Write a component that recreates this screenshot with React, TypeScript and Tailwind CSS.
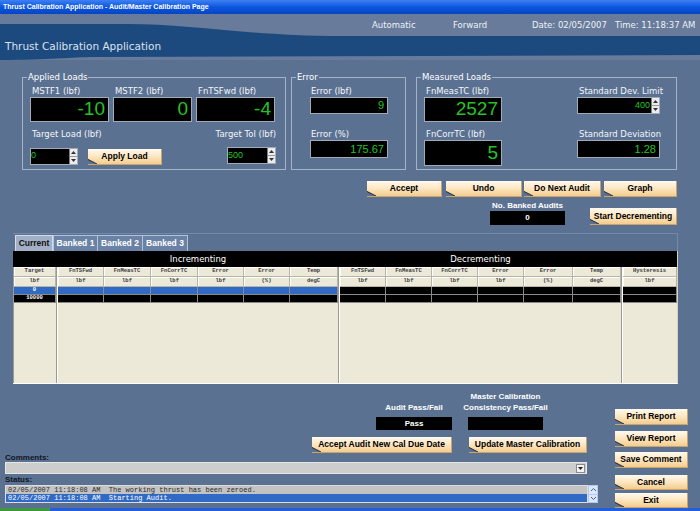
import type { ReactNode } from 'react';

function Btn({ label, className = '' }: { label: string; className?: string }) {
  return (
    <div className={`relative flex items-center justify-center whitespace-nowrap bg-linear-to-b from-[#fffaf0] via-[#fde6c0] to-[#f4cc8e] border-r border-b border-[#c9a46c] font-['Liberation_Sans',sans-serif] text-[8.5px] font-bold text-black ${className}`}>
      {label}
      <svg className="absolute left-0 bottom-0" width="9" height="5" viewBox="0 0 9 5">
        <polygon points="0,0 9,5 0,5" fill="#5b7192" />
        <line x1="0" y1="0.5" x2="9" y2="5" stroke="#2e2e2e" strokeWidth="1" />
      </svg>
    </div>
  );
}

function Label({ children, className = '' }: { children: ReactNode; className?: string }) {
  return <div className={`h-[12px] text-[8.5px] leading-[12px] text-[#f3f5f8] whitespace-nowrap ${className}`}>{children}</div>;
}

function Display({ value, className }: { value: string; className: string }) {
  return (
    <div className={`flex items-center justify-end bg-black border border-[#a3abb8] pr-[3px] text-[#24c424] font-['Liberation_Sans',sans-serif] ${className}`}>
      {value}
    </div>
  );
}

function Spinner({ value, className, align }: { value: string; className: string; align: string }) {
  return (
    <div className={`flex bg-black border border-[#a3abb8] ${className}`}>
      <div className={`flex-1 flex items-center text-[9px] text-[#24c424] font-['Liberation_Sans',sans-serif] ${align}`}>{value}</div>
      <div className="w-[8px] flex flex-col bg-[#ececec] border-l border-[#7f7f7f]">
        <div className="flex-1 flex items-center justify-center border-b border-[#9a9a9a]">
          <svg width="5" height="3" viewBox="0 0 5 3"><polygon points="2.5,0 5,3 0,3" fill="#333" /></svg>
        </div>
        <div className="flex-1 flex items-center justify-center">
          <svg width="5" height="3" viewBox="0 0 5 3"><polygon points="0,0 5,0 2.5,3" fill="#333" /></svg>
        </div>
      </div>
    </div>
  );
}

type Row = { bg: string; texts?: string[] };

function Section({ heads, units, widths, rows }: { heads: string[]; units: string[]; widths: string[]; rows: Row[] }) {
  const head = "h-[10px] flex items-center justify-center border-r border-b border-[#b9b5a6] shadow-[inset_1px_1px_0_#ffffff] text-[5.5px] font-bold text-[#3a3a3a] font-['Liberation_Mono',monospace]";
  return (
    <div className="flex flex-col">
      <div className="flex">
        {heads.map((h, i) => (
          <div key={i} className={`${widths[i]} ${head}`}>{h}</div>
        ))}
      </div>
      <div className="flex">
        {units.map((u, i) => (
          <div key={i} className={`${widths[i]} ${head} h-[9px]`}>{u}</div>
        ))}
      </div>
      {rows.map((r, ri) => (
        <div key={ri} className="flex">
          {widths.map((w, i) => (
            <div key={i} className={`${w} ${r.bg} h-[8px] flex items-center justify-center border-r border-b border-[#8a8a8a] text-white text-[5.5px] font-bold font-['Liberation_Mono',monospace]`}>
              {r.texts?.[i]}
            </div>
          ))}
        </div>
      ))}
    </div>
  );
}

function Sep() {
  return <div className="w-[2px] border-l border-l-[#9c9a92] border-r border-r-white" />;
}

const incHeads = ['FnTSFwd', 'FnMeasTC', 'FnCorrTC', 'Error', 'Error', 'Temp'];
const incUnits = ['lbf', 'lbf', 'lbf', 'lbf', '(%)', 'degC'];
const incW = ['w-[46px]', 'w-[47px]', 'w-[47px]', 'w-[46px]', 'w-[46px]', 'w-[48px]'];
const decW = ['w-[46px]', 'w-[46px]', 'w-[46px]', 'w-[46px]', 'w-[49px]', 'w-[48px]'];

export default function App() {
  return (
    <div className="w-[700px] h-[511px] overflow-hidden bg-[#5b7192] flex flex-col font-['DejaVu_Sans',sans-serif]">
      {/* title bar */}
      <div className="h-[14px] shrink-0 bg-linear-to-b from-[#3d80f2] via-[#0a56e2] to-[#0745c2] pl-[3px] text-[7px] leading-[14px] font-bold text-white font-['Liberation_Sans',sans-serif]">
        Thrust Calibration Application - Audit/Master Calibration Page
      </div>

      {/* header */}
      <div className="relative h-[46px] shrink-0">
        <svg className="absolute inset-0" width="700" height="46" viewBox="0 0 700 46" preserveAspectRatio="none">
          <rect width="700" height="46" fill="#687b9b" />
          <path d="M0 10 L128 10 C190 10 250 22 340 22 L700 22 L700 41 L95 43 C70 43 50 46 0 46 Z" fill="#1c4a7e" />
        </svg>
        <div className="relative flex pt-[6px] h-[20px] text-[8.5px] leading-[10px] text-[#eef1f6] whitespace-nowrap">
          <span className="ml-[372px] w-[81px]">Automatic</span>
          <span className="w-[79px]">Forward</span>
          <span className="w-[83px]">Date: 02/05/2007</span>
          <span>Time: 11:18:37 AM</span>
        </div>
        <div className="relative ml-[5px] mt-[6px] text-[10.5px] leading-[12px] text-[#dbe2ec]">Thrust Calibration Application</div>
      </div>

      {/* groups */}
      <div className="mt-[12px] ml-[22px] flex h-[98px] shrink-0">
        <fieldset className="w-[264px] h-[98px] border border-[#a5b3c7]">
          <legend className="ml-[4px] px-[1px] text-[8.5px] leading-[10px] text-white">Applied Loads</legend>
          <div className="pl-[7px]">
            <div className="flex gap-[4px] mt-[3px]">
              {[
                ['MSTF1 (lbf)', '-10'],
                ['MSTF2 (lbf)', '0'],
                ['FnTSFwd (lbf)', '-4'],
              ].map(([l, v]) => (
                <div key={l} className="w-[79px]">
                  <Label className="pl-[2px]">{l}</Label>
                  <Display value={v} className="h-[25px] text-[19px]" />
                </div>
              ))}
            </div>
            <div className="flex justify-between w-[246px] mt-[6px]">
              <div className="flex flex-col">
                <Label className="pl-[2px]">Target Load (lbf)</Label>
                <div className="flex items-center mt-[7px]">
                  <Spinner value="0" className="w-[48px] h-[17px]" align="justify-start" />
                  <Btn label="Apply Load" className="ml-[10px] w-[74px] h-[16px] mt-[2px]" />
                </div>
              </div>
              <div className="flex flex-col items-end">
                <Label>Target Tol (lbf)</Label>
                <Spinner value="500" className="w-[49px] h-[17px] mt-[7px]" align="justify-start" />
              </div>
            </div>
          </div>
        </fieldset>

        <fieldset className="ml-[5px] w-[115px] h-[98px] border border-[#a5b3c7]">
          <legend className="ml-[4px] px-[1px] text-[8.5px] leading-[10px] text-white">Error</legend>
          <div className="pl-[18px] w-[96px]">
            <Label className="mt-[3px] pl-[1px]">Error (lbf)</Label>
            <Display value="9" className="h-[17px] text-[11px]" />
            <Label className="mt-[14px] pl-[1px]">Error (%)</Label>
            <Display value="175.67" className="h-[18px] text-[11px]" />
          </div>
        </fieldset>

        <fieldset className="ml-[10px] w-[261px] h-[98px] border border-[#a5b3c7]">
          <legend className="ml-[4px] px-[1px] text-[8.5px] leading-[10px] text-white">Measured Loads</legend>
          <div className="pl-[7px] flex">
            <div className="w-[78px]">
              <Label className="mt-[3px] pl-[2px]">FnMeasTC (lbf)</Label>
              <Display value="2527" className="h-[25px] text-[19px]" />
              <Label className="mt-[6px] pl-[2px]">FnCorrTC (lbf)</Label>
              <Display value="5" className="h-[26px] text-[19px]" />
            </div>
            <div className="ml-[75px] w-[83px]">
              <Label className="mt-[3px] pl-[2px]">Standard Dev. Limit</Label>
              <Spinner value="400" className="w-[83px] h-[17px]" align="justify-end pr-[1px]" />
              <Label className="mt-[14px] pl-[2px]">Standard Deviation</Label>
              <Display value="1.28" className="h-[18px] text-[11px]" />
            </div>
          </div>
        </fieldset>
      </div>

      {/* action buttons */}
      <div className="mt-[11px] ml-[367px] flex h-[16px] shrink-0">
        <Btn label="Accept" className="w-[75px] h-[16px]" />
        <Btn label="Undo" className="ml-[4px] w-[76px] h-[16px]" />
        <Btn label="Do Next Audit" className="ml-[2px] w-[77px] h-[16px]" />
        <Btn label="Graph" className="ml-[3px] w-[73px] h-[16px]" />
      </div>
      <div className="mt-[4px] flex h-[24px] shrink-0">
        <div className="ml-[490px] w-[75px] flex flex-col items-center">
          <div className="h-[10px] text-[8px] leading-[10px] font-bold text-white whitespace-nowrap font-['Liberation_Sans',sans-serif]">No. Banked Audits</div>
          <div className="w-[75px] h-[14px] bg-black flex items-center justify-center text-white text-[8px] font-bold font-['Liberation_Sans',sans-serif]">0</div>
        </div>
        <Btn label="Start Decrementing" className="ml-[25px] w-[87px] h-[17px] self-end" />
      </div>

      {/* tabs */}
      <div className="mt-[8px] ml-[13px] w-[665px] h-[18px] shrink-0 flex items-end pl-[2px] border-t border-r border-[#7489a8] font-['Liberation_Sans',sans-serif] text-[8.5px] font-bold">
        <div className="w-[38px] h-[16px] flex items-center justify-center bg-[#a1b0c6] border border-b-0 border-[#d6dde8] text-[#111111]">Current</div>
        <div className="w-[45px] h-[16px] flex items-center justify-center bg-[#6a82a5] border border-b-0 border-[#b7c3d4] text-white">Banked 1</div>
        <div className="w-[45px] h-[16px] flex items-center justify-center bg-[#6a82a5] border border-b-0 border-l-0 border-[#b7c3d4] text-white">Banked 2</div>
        <div className="w-[45px] h-[16px] flex items-center justify-center bg-[#6a82a5] border border-b-0 border-l-0 border-[#b7c3d4] text-white">Banked 3</div>
      </div>

      {/* table */}
      <div className="ml-[13px] w-[665px] h-[133px] shrink-0 flex flex-col bg-[#ece9d8] border-b border-b-white border-r border-r-[#d8d4c4]">
        <div className="h-[16px] shrink-0 bg-black flex items-center text-white text-[8.5px]">
          <div className="w-[45px]" />
          <div className="w-[280px] text-center">Incrementing</div>
          <div className="w-[2px]" />
          <div className="w-[281px] text-center">Decrementing</div>
        </div>
        <div className="flex-1 flex border-l border-l-[#9c9a92]">
          <Section heads={['Target']} units={['lbf']} widths={['w-[42px]']} rows={[{ bg: 'bg-[#316ac5]', texts: ['0'] }, { bg: 'bg-black', texts: ['10000'] }]} />
          <Sep />
          <Section heads={incHeads} units={incUnits} widths={incW} rows={[{ bg: 'bg-[#316ac5]' }, { bg: 'bg-black' }]} />
          <Sep />
          <Section heads={incHeads} units={incUnits} widths={decW} rows={[{ bg: 'bg-black' }, { bg: 'bg-black' }]} />
          <Sep />
          <Section heads={['Hysteresis']} units={['lbf']} widths={['w-[54px]']} rows={[{ bg: 'bg-black' }, { bg: 'bg-black' }]} />
        </div>
      </div>

      {/* bottom */}
      <div className="mt-[6px] h-[118px] shrink-0 flex">
        <div className="w-[600px] flex flex-col">
          <div className="ml-[312px] flex pt-[2px] font-['Liberation_Sans',sans-serif] text-[8px] font-bold text-white">
            <div className="w-[140px] flex flex-col items-end">
              <div className="w-[76px] h-[21px] flex flex-col items-center justify-end">
                <div className="leading-[11px] whitespace-nowrap">Audit Pass/Fail</div>
              </div>
              <div className="mt-[4px] w-[76px] h-[13px] bg-black flex items-center justify-center">Pass</div>
              <Btn label="Accept Audit New Cal Due Date" className="mt-[7px] w-[140px] h-[16px]" />
            </div>
            <div className="ml-[16px] w-[119px] flex flex-col items-start">
              <div className="w-[75px] h-[21px] flex flex-col items-center justify-end">
                <div className="leading-[11px] whitespace-nowrap">Master Calibration</div>
                <div className="leading-[11px] whitespace-nowrap">Consistency Pass/Fail</div>
              </div>
              <div className="mt-[4px] w-[75px] h-[13px] bg-black" />
              <Btn label="Update Master Calibration" className="mt-[7px] ml-[1px] w-[118px] h-[16px]" />
            </div>
          </div>
          <div className="mt-[1px] ml-[5px] h-[8px] text-[8px] leading-[8px] font-bold text-[#0e1622] font-['Liberation_Sans',sans-serif]">Comments:</div>
          <div className="ml-[5px] w-[582px] h-[12px] bg-[#cdcdcd] border border-[#e6e6e6] flex justify-end items-center pr-[1px]">
            <div className="w-[9px] h-[9px] bg-[#f2f2f2] border border-[#8a8a8a] flex items-center justify-center">
              <svg width="5" height="3" viewBox="0 0 5 3"><polygon points="0,0 5,0 2.5,3" fill="#222" /></svg>
            </div>
          </div>
          <div className="mt-[2px] ml-[5px] h-[8px] text-[8px] leading-[8px] font-bold text-[#0e1622] font-['Liberation_Sans',sans-serif]">Status:</div>
          <div className="mt-[1px] ml-[5px] flex h-[18px]">
            <div className="w-[583px] flex flex-col border border-[#dcdcdc] bg-[#c3c3c3] font-['Liberation_Mono',monospace] text-[7px] leading-[8px] whitespace-pre">
              <div className="h-[8px] pl-[2px] text-[#2a2a2a]">02/05/2007 11:18:08 AM  The working thrust has been zeroed.</div>
              <div className="h-[8px] pl-[2px] bg-[#316ac5] text-white">02/05/2007 11:18:08 AM  Starting Audit.</div>
            </div>
            <div className="w-[10px] flex flex-col">
              <div className="flex-1 flex items-center justify-center bg-[#dbe6fb] border border-[#b4c8f0]">
                <svg width="5" height="3" viewBox="0 0 5 3"><polyline points="0,3 2.5,0.5 5,3" fill="none" stroke="#4d6185" strokeWidth="1" /></svg>
              </div>
              <div className="flex-1 flex items-center justify-center bg-[#dbe6fb] border border-t-0 border-[#b4c8f0]">
                <svg width="5" height="3" viewBox="0 0 5 3"><polyline points="0,0 2.5,2.5 5,0" fill="none" stroke="#4d6185" strokeWidth="1" /></svg>
              </div>
            </div>
          </div>
        </div>
        <div className="ml-[15px] w-[73px] flex flex-col">
          <Btn label="Print Report" className="mt-[19px] w-[73px] h-[16px]" />
          <Btn label="View Report" className="mt-[6px] w-[73px] h-[16px]" />
          <Btn label="Save Comment" className="mt-[5px] w-[73px] h-[16px]" />
          <Btn label="Cancel" className="mt-[7px] w-[73px] h-[15px]" />
          <Btn label="Exit" className="mt-[3px] w-[73px] h-[15px]" />
        </div>
      </div>

      {/* taskbar edge */}
      <div className="h-[3px] shrink-0 flex">
        <div className="w-[50px] bg-[#3c9a3c]" />
        <div className="flex-1 bg-[#245edb]" />
      </div>
    </div>
  );
}
